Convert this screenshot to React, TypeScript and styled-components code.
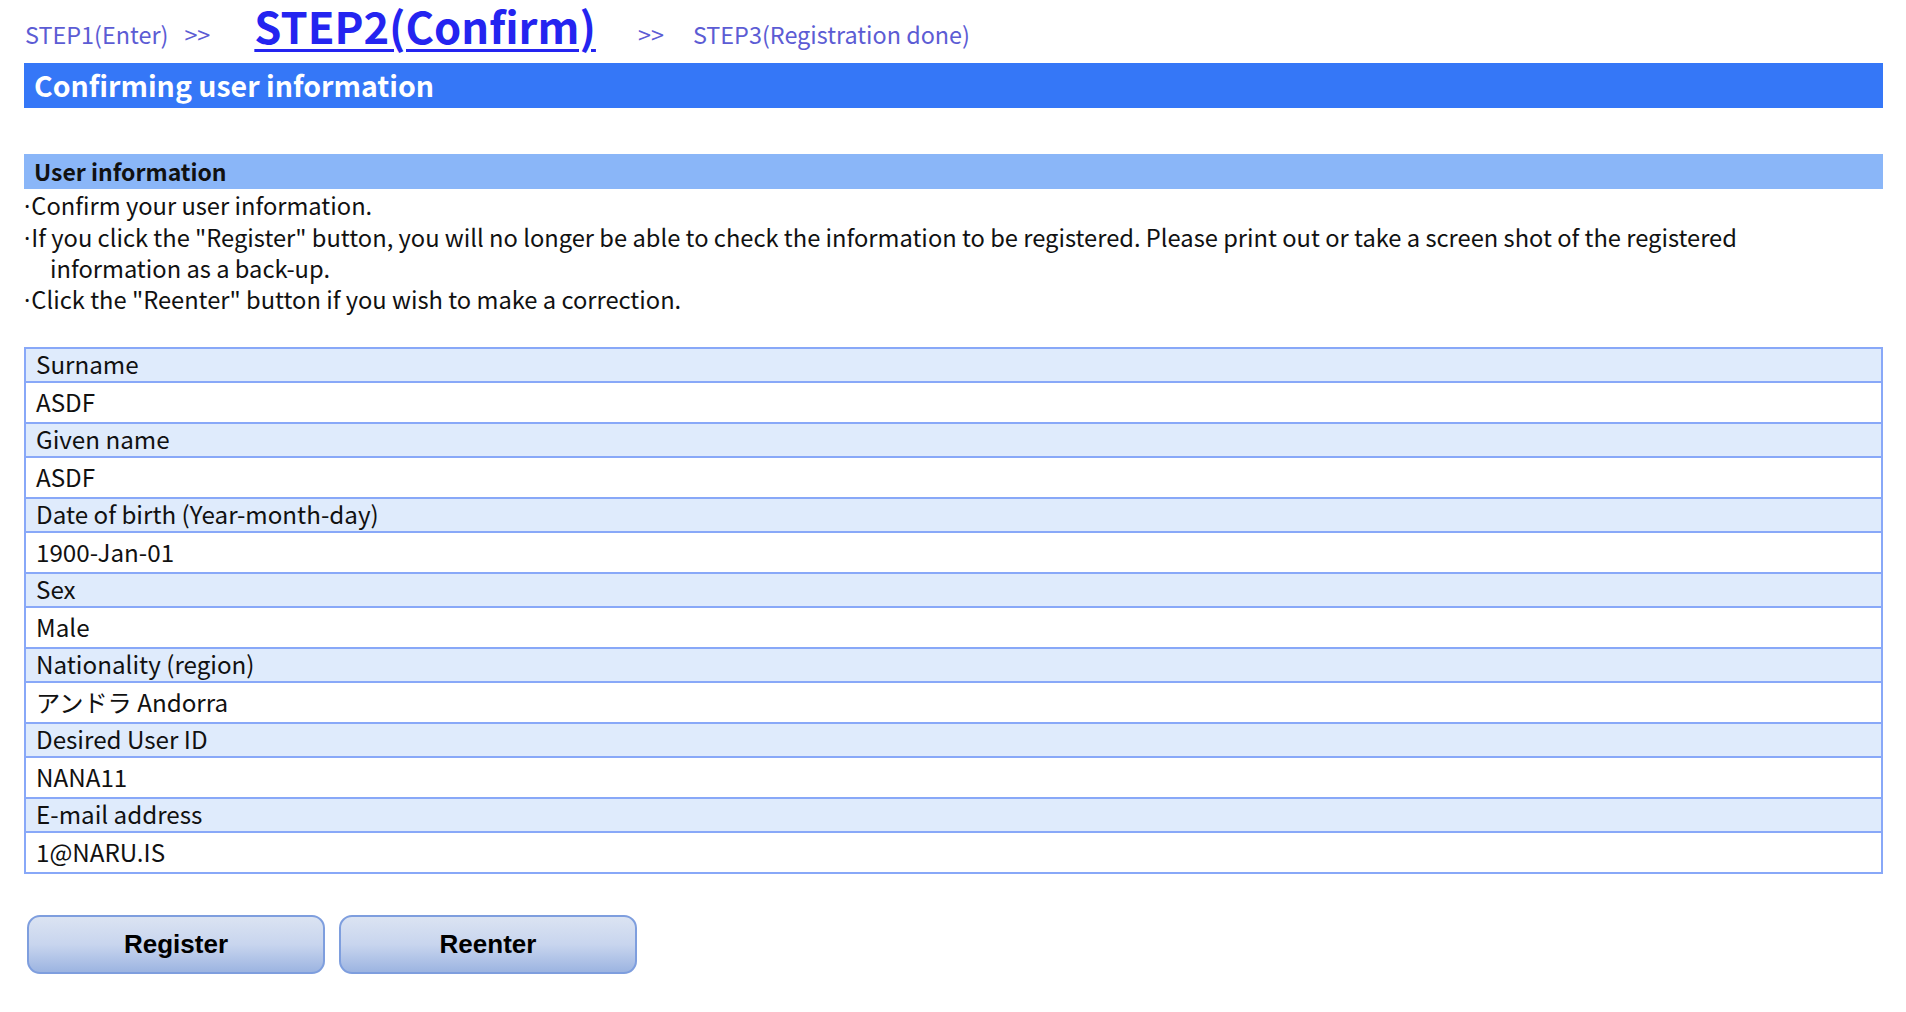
import React from "react";
import styled, { createGlobalStyle } from "styled-components";

const GlobalStyle = createGlobalStyle`
  html, body { margin: 0; padding: 0; background: #ffffff; }
  body { font-family: "Noto Sans CJK KR", "Noto Sans", sans-serif; color: #111111; }
`;

const Page = styled.div`
  padding: 0 23px 40px 24px;
`;

const Steps = styled.div`
  display: flex;
  align-items: baseline;
  height: 63px;
  padding: 1px 0 0 1px;
  box-sizing: border-box;
`;

const Step = styled.span<{ $gap?: number }>`
  font-size: 23.4px;
  color: #5c5cd4;
  margin-left: ${(p) => p.$gap ?? 0}px;
  line-height: 50px;
`;

const CurrentStep = styled.a<{ $gap?: number }>`
  font-size: 43.5px;
  font-weight: 700;
  color: #2424f0;
  text-decoration: underline;
  text-decoration-thickness: 3px;
  text-underline-offset: 5px;
  margin-left: ${(p) => p.$gap ?? 0}px;
  line-height: 50px;
`;

const TitleBar = styled.h1`
  margin: 0;
  height: 45px;
  background: #3577f7;
  color: #ffffff;
  font-size: 28.5px;
  font-weight: 700;
  padding: 0 0 3px 10px;
  box-sizing: border-box;
  display: flex;
  align-items: center;
`;

const SectionBar = styled.h2`
  margin: 46px 0 0;
  height: 35px;
  background: #8ab6f8;
  color: #111111;
  font-size: 23px;
  font-weight: 700;
  padding: 0 0 2px 10px;
  box-sizing: border-box;
  display: flex;
  align-items: center;
`;

const Notes = styled.div`
  margin: 1px 0 0;
  font-size: 23.7px;
  line-height: 30.5px;
`;

const Note = styled.p`
  margin: 0;
  padding-left: 26px;
  text-indent: -26px;
`;

const Dot = styled.span`
  font-family: "Noto Sans", sans-serif;
  margin-right: 1px;
`;

const Table = styled.div`
  margin-top: 32px;
  border: 2px solid #88a8f8;
  display: flex;
  flex-direction: column;
`;

const Cell = styled.div<{ $label?: boolean }>`
  height: ${(p) => (p.$label ? 34 : 41)}px;
  box-sizing: border-box;
  background: ${(p) => (p.$label ? "#dfebfc" : "#ffffff")};
  border-bottom: 2px solid #88a8f8;
  padding: 0 0 3px 10px;
  font-size: 24.2px;
  display: flex;
  align-items: center;
  color: #111111;
  &:last-child { border-bottom: none; height: 39px; }
`;

const Buttons = styled.div`
  display: flex;
  gap: 14px;
  margin-top: 41px;
  padding-left: 3px;
`;

const Button = styled.button`
  width: 298px;
  height: 59px;
  border: 2px solid #7e9ede;
  border-radius: 13px;
  background: linear-gradient(to bottom, #dbe3f2 0%, #c8d5ee 50%, #9cb4e1 100%);
  font-family: "Liberation Sans", Arial, sans-serif;
  font-weight: 700;
  font-size: 26px;
  color: #000000;
  cursor: pointer;
`;

const rows: [string, string][] = [
  ["Surname", "ASDF"],
  ["Given name", "ASDF"],
  ["Date of birth (Year-month-day)", "1900-Jan-01"],
  ["Sex", "Male"],
  ["Nationality (region)", "アンドラ Andorra"],
  ["Desired User ID", "NANA11"],
  ["E-mail address", "1@NARU.IS"],
];

export default function App() {
  return (
    <Page>
      <GlobalStyle />
      <Steps>
        <Step>STEP1(Enter)</Step>
        <Step $gap={16}>&gt;&gt;</Step>
        <CurrentStep $gap={44}>STEP2(Confirm)</CurrentStep>
        <Step $gap={42}>&gt;&gt;</Step>
        <Step $gap={29}>STEP3(Registration done)</Step>
      </Steps>
      <TitleBar>Confirming user information</TitleBar>
      <SectionBar>User information</SectionBar>
      <Notes>
        <Note>
          <Dot>·</Dot>Confirm your user information.
        </Note>
        <Note>
          <Dot>·</Dot>If you click the "Register" button, you will no longer be able to check the information to be registered. Please print out or take a screen shot of the registered
          <br />
          information as a back-up.
        </Note>
        <Note>
          <Dot>·</Dot>Click the "Reenter" button if you wish to make a correction.
        </Note>
      </Notes>
      <Table>
        {rows.map(([label, value]) => (
          <React.Fragment key={label}>
            <Cell $label>{label}</Cell>
            <Cell>{value}</Cell>
          </React.Fragment>
        ))}
      </Table>
      <Buttons>
        <Button type="button">Register</Button>
        <Button type="button">Reenter</Button>
      </Buttons>
    </Page>
  );
}
